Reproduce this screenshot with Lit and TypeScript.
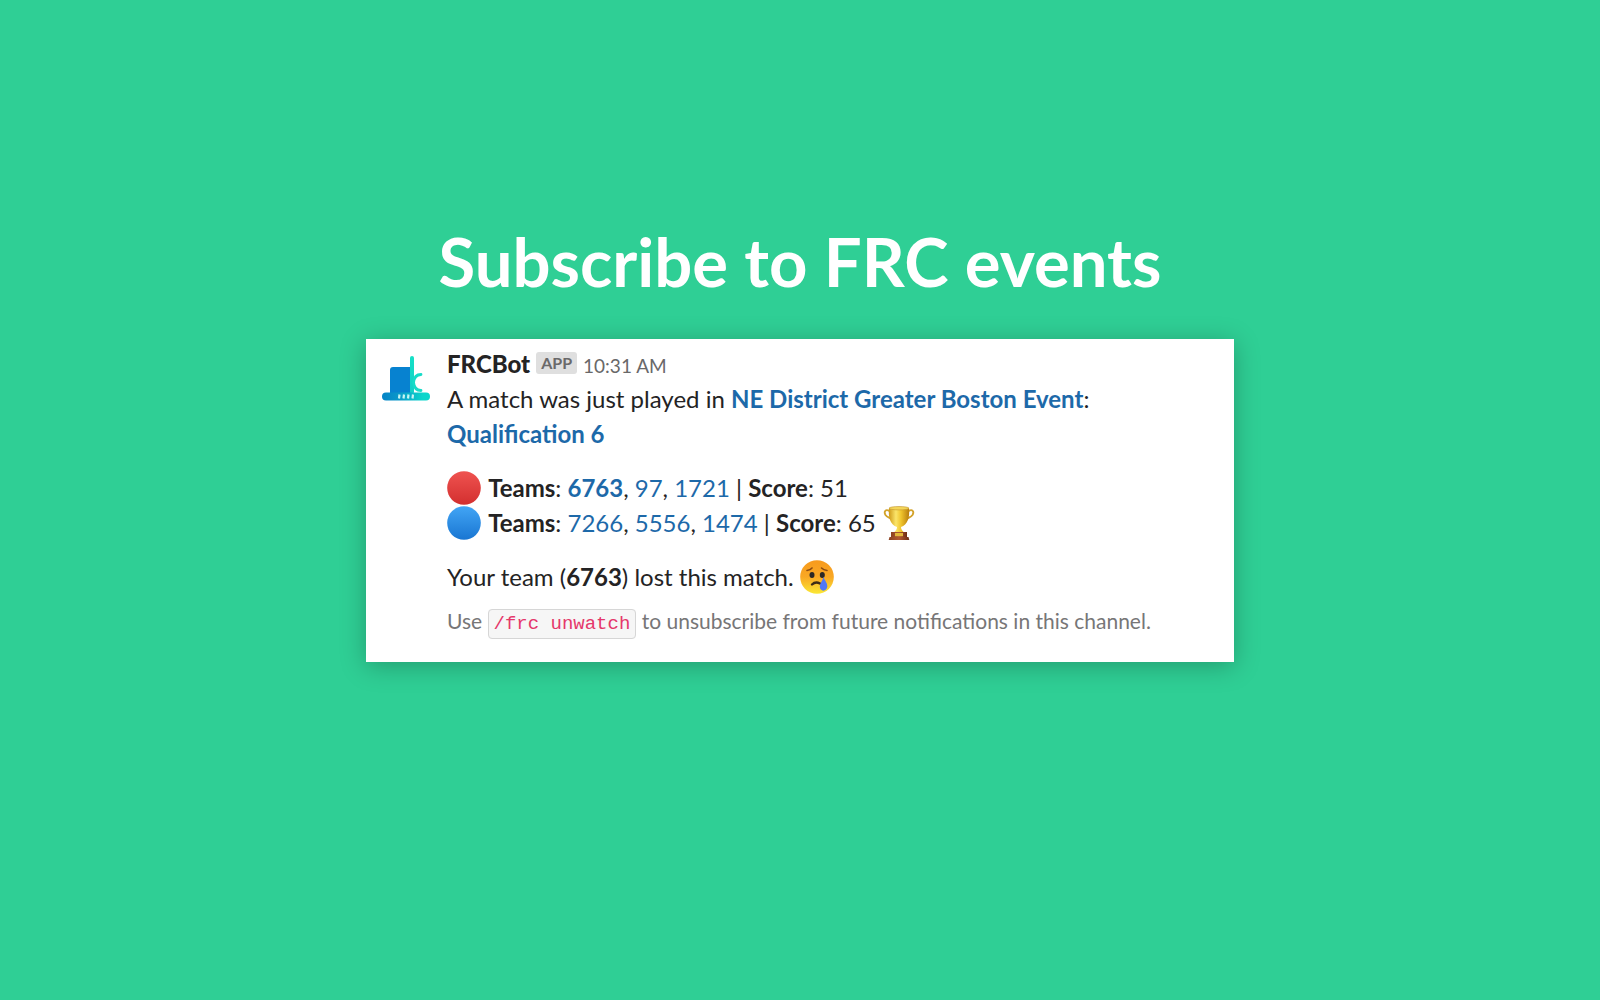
import { LitElement, html, css, svg } from "lit";
import { customElement } from "lit/decorators.js";

const avatar = html`<svg class="avatar" viewBox="0 0 48 48" role="img" aria-label="FRCBot">
  <defs>
    <linearGradient id="brim" x1="0" x2="1"><stop offset="0" stop-color="#0583c6" /><stop offset=".35" stop-color="#0a98c9" /><stop offset=".85" stop-color="#0cd6cb" /></linearGradient>
    <linearGradient id="mast" x1="0" x2="0" y1="0" y2="1"><stop offset="0" stop-color="#16e0c6" /><stop offset="1" stop-color="#12cfc8" /></linearGradient>
  </defs>
  <path d="M8 38V14q0-3 3-3h19v27z" fill="#0782d0" />
  <rect x="28" y="0" width="4" height="38" rx="2" fill="url(#mast)" />
  <path d="M39 18.500C34 18.500 32 22 31.500 26.500C32 31 34 34.500 39 34.500" fill="none" stroke="#16dcc8" stroke-width="2.800" stroke-linecap="round" />
  <rect x="0" y="36.500" width="48" height="8" rx="4" fill="url(#brim)" />
  <path d="M17.500 38.500l-.5 4M22 38.500l-.5 4M26.500 38.500l-.5 4M31 38.500l-.5 4" stroke="#c9f5f3" stroke-width="2.200" />
</svg>`;

const disc = (name: string, label: string, top: string, bottom: string) => html`<svg class="emoji" viewBox="0 0 34 34" role="img" aria-label=${label}>
  <defs><linearGradient id=${name} x1="0" x2="0" y1="0" y2="1"><stop offset="0" stop-color=${top} /><stop offset="1" stop-color=${bottom} /></linearGradient></defs>
  ${svg`<circle cx="17" cy="17" r="16.800" fill="url(#${name})" />`}
</svg>`;

const trophy = html`<svg class="emoji" viewBox="0 0 34 34" role="img" aria-label="Trophy">
  <defs>
    <linearGradient id="gold" x1="0" x2="1"><stop offset="0" stop-color="#cf9a18" /><stop offset=".35" stop-color="#fbe56a" /><stop offset=".6" stop-color="#f0c52c" /><stop offset="1" stop-color="#b87d0c" /></linearGradient>
    <linearGradient id="wood" x1="0" x2="1"><stop offset="0" stop-color="#8c4221" /><stop offset=".5" stop-color="#b25a33" /><stop offset="1" stop-color="#6d2c14" /></linearGradient>
  </defs>
  <path d="M8 5.500C3.500 2.500 1.500 5.500 3.500 9C5.500 12 9.500 11.500 11.500 15.500M26 5.500C30.500 2.500 32.500 5.500 30.500 9C28.500 12 24.500 11.500 22.500 15.500" fill="none" stroke="#d3a32b" stroke-width="1.800" stroke-linecap="round" />
  <path d="M7 2C6 12 8.500 18.500 15 21C15 23 14 24.500 12 26.500H22C20 24.500 19 23 19 21C25.500 18.500 28 12 27 2z" fill="url(#gold)" />
  <ellipse cx="17" cy="2.200" rx="10" ry="1.700" fill="#f4d65a" stroke="#c3942a" stroke-width=".6" />
  <path d="M9 26h16v5H9z" fill="url(#wood)" />
  <rect x="13" y="27" width="8" height="3.200" fill="#e3b83c" />
  <path d="M7.500 31h19l.8 3H6.700z" fill="url(#wood)" />
</svg>`;

const crying = html`<svg class="emoji" viewBox="0 0 34 34" role="img" aria-label="Crying face">
  <defs><linearGradient id="face" x1="0" x2="0" y1="0" y2="1"><stop offset="0" stop-color="#f79a1d" /><stop offset=".5" stop-color="#f9a825" /><stop offset="1" stop-color="#fbe835" /></linearGradient></defs>
  <circle cx="17" cy="17" r="16.800" fill="url(#face)" />
  <path d="M7 10.500Q10.500 10 12 8M21.500 8Q23.500 10 27 10.500" fill="none" stroke="#8a4a12" stroke-width="1.600" stroke-linecap="round" />
  <ellipse cx="12" cy="15" rx="2.500" ry="2.900" fill="#2b2826" />
  <ellipse cx="22.300" cy="15" rx="2.500" ry="2.900" fill="#2b2826" />
  <path d="M12 24.500Q15.500 21 20 23.500" fill="none" stroke="#3d2b16" stroke-width="2.400" stroke-linecap="round" />
  <path d="M23.500 17C25 21 27.500 23 27.300 26.500C27 32 19.600 32 19.800 26.500C20 23 22.500 21 23.500 17z" fill="#5078f5" />
</svg>`;

@customElement("app-root")
export class AppRoot extends LitElement {
  static styles = css`
    :host {
      display: block;
    }
    .page {
      box-sizing: border-box;
      min-height: 100vh;
      display: grid;
      grid-template-rows: 1fr auto 1fr;
      justify-items: center;
      padding: 0 24px;
      background: #2fcf95;
      font-family: Lato, "Liberation Sans", sans-serif;
      color: #242324;
    }
    .title {
      align-self: end;
      margin: 0;
      padding-bottom: 36px;
      font-size: 67px;
      line-height: 84px;
      font-weight: 700;
      color: #fff;
      text-align: center;
    }
    .card {
      box-sizing: border-box;
      width: 100%;
      max-width: 868px;
      display: flex;
      gap: 17px;
      padding: 8px 24px 24px 16px;
      background: #fff;
      box-shadow: 0 4px 24px rgba(0, 0, 0, 0.25);
      font-size: 24px;
      line-height: 35px;
    }
    .avatar {
      flex: none;
      width: 48px;
      height: 48px;
      margin-top: 9px;
    }
    .body {
      flex: 1;
      min-width: 0;
    }
    .head {
      display: flex;
      align-items: baseline;
      gap: 6px;
      line-height: 34px;
    }
    .name {
      font-weight: 900;
    }
    .badge {
      align-self: center;
      margin-bottom: 2px;
      padding: 0 5px;
      border-radius: 3px;
      background: #dfdfdf;
      color: #6a696a;
      font-size: 16px;
      line-height: 22px;
      font-weight: 700;
    }
    .time {
      color: #696869;
      font-size: 19px;
      line-height: 22px;
    }
    .text {
      margin: 0 0 19px;
    }
    .result {
      margin: 0 0 9px;
    }
    .hint {
      margin: 0;
      color: #777677;
      font-size: 21px;
    }
    a {
      color: #1d69a9;
      text-decoration: none;
    }
    .event {
      font-weight: 700;
    }
    .emoji {
      width: 34px;
      height: 34px;
      vertical-align: middle;
      margin: -7px 1px -3px 0;
    }
    .command {
      padding: 3px 5px;
      border: 1px solid #d6d6d6;
      border-radius: 4px;
      background: #f6f6f6;
      color: #e5386b;
      font-family: "Liberation Mono", monospace;
      font-size: 19px;
      line-height: 22px;
    }
  `;

  private team(id: number) {
    return html`<a href="#team-${id}">${id}</a>`;
  }

  render() {
    return html`<main class="page">
      <h1 class="title">Subscribe to FRC events</h1>
      <article class="card">
        ${avatar}
        <div class="body">
          <header class="head"><span class="name">FRCBot</span><span class="badge">APP</span><time class="time">10:31 AM</time></header>
          <p class="text">A match was just played in <a class="event" href="#event">NE District Greater Boston Event</a>: <a class="event" href="#match">Qualification 6</a></p>
          <p class="text">
            ${disc("red", "Red alliance", "#ef5350", "#d32f2f")} <b>Teams</b>: <b>${this.team(6763)}</b>, ${this.team(97)}, ${this.team(1721)} | <b>Score</b>: 51<br />
            ${disc("blue", "Blue alliance", "#42a5f5", "#1976d2")} <b>Teams</b>: ${this.team(7266)}, ${this.team(5556)}, ${this.team(1474)} | <b>Score</b>: 65 ${trophy}
          </p>
          <p class="result">Your team (<b>6763</b>) lost this match. ${crying}</p>
          <p class="hint">Use <code class="command">/frc unwatch</code> to unsubscribe from future notifications in this channel.</p>
        </div>
      </article>
    </main>`;
  }
}
